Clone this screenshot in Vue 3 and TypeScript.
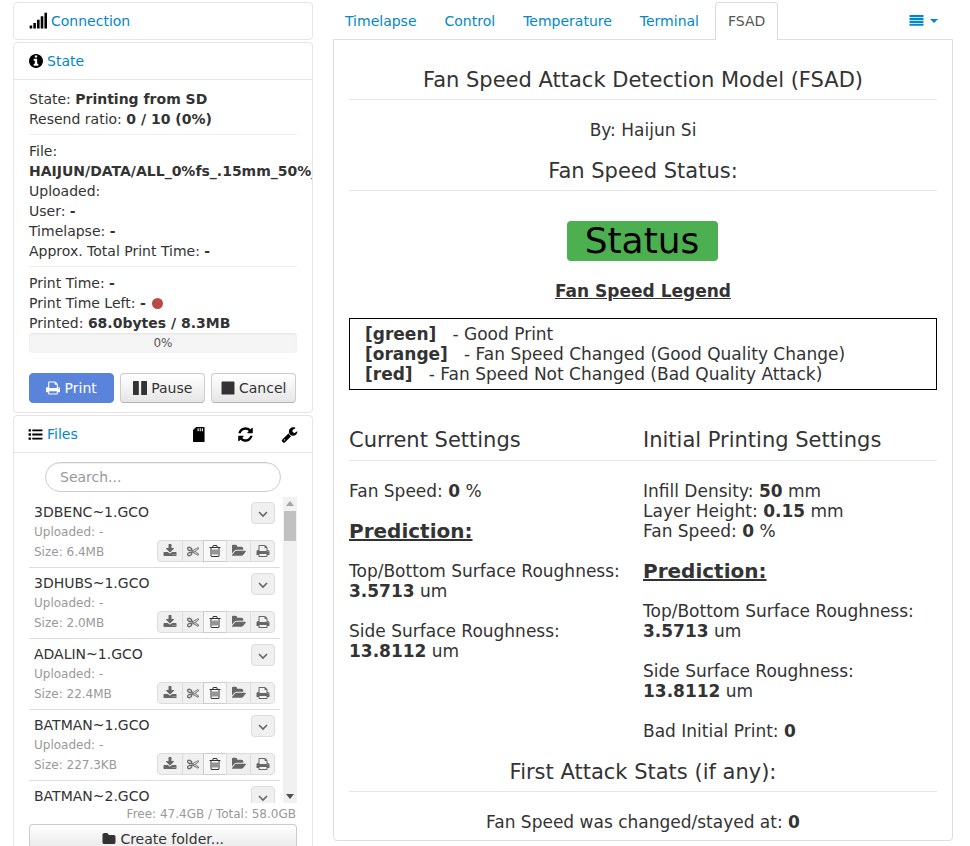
<script setup lang="ts">
const icons: Record<string, string> = {
  info: 'M1152 1376v-160q0-14-9-23t-23-9h-96v-512q0-14-9-23t-23-9h-320q-14 0-23 9t-9 23v160q0 14 9 23t23 9h96v320h-96q-14 0-23 9t-9 23v160q0 14 9 23t23 9h448q14 0 23-9t9-23zm-128-896v-160q0-14-9-23t-23-9h-192q-14 0-23 9t-9 23v160q0 14 9 23t23 9h192q14 0 23-9t9-23zm640 416q0 209-103 385.5t-279.5 279.5-385.5 103-385.5-103-279.5-279.5-103-385.5 103-385.5 279.5-279.5 385.5-103 385.5 103 279.5 279.5 103 385.5z',
  print: 'M448 1536h896v-256h-896v256zm0-640h896v-384h-160q-40 0-68-28t-28-68v-160h-640v640zm1152 64q0-26-19-45t-45-19-45 19-19 45 19 45 45 19 45-19 19-45zm128 0v416q0 13-9.5 22.5t-22.5 9.5h-224v160q0 40-28 68t-68 28h-960q-40 0-68-28t-28-68v-160h-224q-13 0-22.5-9.5t-9.5-22.5v-416q0-79 56.5-135.5t135.5-56.5h64v-544q0-40 28-68t68-28h672q40 0 88 20t76 48l152 152q28 28 48 76t20 88v256h64q79 0 135.5 56.5t56.5 135.5z',
  pause: 'M1664 192v1408q0 26-19 45t-45 19h-512q-26 0-45-19t-19-45v-1408q0-26 19-45t45-19h512q26 0 45 19t19 45zm-896 0v1408q0 26-19 45t-45 19h-512q-26 0-45-19t-19-45v-1408q0-26 19-45t45-19h512q26 0 45 19t19 45z',
  stop: 'M1664 192v1408q0 26-19 45t-45 19h-1408q-26 0-45-19t-19-45v-1408q0-26 19-45t45-19h1408q26 0 45 19t19 45z',
  refresh: 'M1639 1056q0 5-1 7-64 268-268 434.5t-478 166.5q-146 0-282.5-55t-243.5-157l-129 129q-19 19-45 19t-45-19-19-45v-448q0-26 19-45t45-19h448q26 0 45 19t19 45-19 45l-137 137q71 66 161 102t187 36q134 0 250-65t186-179q11-17 53-117 8-23 30-23h192q13 0 22.5 9.5t9.5 22.5zm25-800v448q0 26-19 45t-45 19h-448q-26 0-45-19t-19-45 19-45l138-138q-148-137-349-137-134 0-250 65t-186 179q-11 17-53 117-8 23-30 23h-199q-13 0-22.5-9.5t-9.5-22.5v-7q65-268 270-434.5t480-166.5q146 0 284 55.5t245 156.5l130-129q19-19 45-19t45 19 19 45z',
  wrench: 'M448 1472q0-26-19-45t-45-19-45 19-19 45 19 45 45 19 45-19 19-45zm644-420l-682 682q-37 37-90 37-52 0-91-37l-106-108q-38-36-38-90 0-53 38-91l681-681q39 98 114.5 173.5t173.5 114.5zm634-435q0 39-23 106-47 134-164.5 217.5t-258.5 83.5q-185 0-316.5-131.5t-131.5-316.5 131.5-316.5 316.5-131.5q58 0 121.5 16.5t107.5 46.5q16 11 16 28t-16 28l-293 169v224l193 107q5-3 79-48.5t135.5-81 70.5-35.5q15 0 23.5 10t8.5 25z',
  download: 'M1344 1344q0-26-19-45t-45-19-45 19-19 45 19 45 45 19 45-19 19-45zm256 0q0-26-19-45t-45-19-45 19-19 45 19 45 45 19 45-19 19-45zm128-224v320q0 40-28 68t-68 28h-1472q-40 0-68-28t-28-68v-320q0-40 28-68t68-28h465l135 136q58 56 136 56t136-56l136-136h464q40 0 68 28t28 68zm-325-569q17 41-14 70l-448 448q-18 19-45 19t-45-19l-448-448q-31-29-14-70 17-39 59-39h256v-448q0-26 19-45t45-19h256q26 0 45 19t19 45v448h256q42 0 59 39z',
  open: 'M1781 931q0 31-31 66l-336 396q-43 51-120.5 86.5t-143.5 35.5h-1088q-34 0-60.5-13t-26.5-43q0-31 31-66l336-396q43-51 120.5-86.5t143.5-35.5h1088q34 0 60.5 13t26.5 43zm-343-344v160h-832q-94 0-197 47.5t-164 119.5l-337 396-5 6q0-4-.5-12.5t-.5-12.5v-960q0-92 66-158t158-66h320q92 0 158 66t66 158v32h544q92 0 158 66t66 158z',
  folder: 'M1728 608v704q0 92-66 158t-158 66h-1216q-92 0-158-66t-66-158v-960q0-92 66-158t158-66h320q92 0 158 66t66 158v32h672q92 0 158 66t66 158z',
  trash: 'M704 736v576q0 14-9 23t-23 9h-64q-14 0-23-9t-9-23v-576q0-14 9-23t23-9h64q14 0 23 9t9 23zm256 0v576q0 14-9 23t-23 9h-64q-14 0-23-9t-9-23v-576q0-14 9-23t23-9h64q14 0 23 9t9 23zm256 0v576q0 14-9 23t-23 9h-64q-14 0-23-9t-9-23v-576q0-14 9-23t23-9h64q14 0 23 9t9 23zm128 724v-948h-896v948q0 22 7 40.5t14.5 27 10.5 8.5h832q3 0 10.5-8.5t14.5-27 7-40.5zm-672-1076h448l-48-117q-7-9-17-11h-317q-10 2-17 11zm928 32v64q0 14-9 23t-23 9h-96v948q0 83-47 143.5t-113 60.5h-832q-66 0-113-58.5t-47-141.5v-952h-96q-14 0-23-9t-9-23v-64q0-14 9-23t23-9h309l70-167q15-37 54-63t79-26h320q40 0 79 26t54 63l70 167h309q14 0 23 9t9 23z',
  cut: 'M960 896q26 0 45 19t19 45-19 45-45 19-45-19-19-45 19-45 45-19zm300 64l507 398q28 20 25 56-5 35-35 51l-128 64q-13 7-29 7-17 0-31-8l-690-387-110 66q-8 4-12 5 14 49 10 97-7 77-56 147.5t-132 123.5q-132 84-277 84-136 0-222-78-90-84-79-207 7-76 56-147t131-124q132-84 278-84 83 0 151 31 9-13 22-22l122-73-122-73q-13-9-22-22-68 31-151 31-146 0-278-84-82-53-131-124t-56-147q-5-59 15.5-113t63.5-93q85-79 222-79 145 0 277 84 83 52 132 123t56 148q4 48-10 97 4 1 12 5l110 66 690-387q14-8 31-8 16 0 29 7l128 64q30 16 35 51 3 36-25 56zm-681-260q46-42 21-108t-106-117q-92-59-192-59-74 0-113 36-46 42-21 108t106 117q92 59 192 59 74 0 113-36zm-85 745q81-51 106-117t-21-108q-39-36-113-36-100 0-192 59-81 51-106 117t21 108q39 36 113 36 100 0 192-59zm178-613l96 58v-11q0-36 33-56l14-8-79-47-26 26q-3 3-10 11t-12 12q-2 2-4 3.5t-3 2.5zm224 224l96 32 736-576-128-64-768 431v113l-160 96 9 8q2 2 7 6 4 4 11 12t11 12l26 26zm704 416l128-64-520-408-177 138q-2 3-13 7z',
  sd: 'M640 96h832q64 0 64 64v1472q0 64-64 64H384q-64 0-64-64V416zM800 224v320h112V224zm224 0v320h112V224zm224 0v320h112V224z',
  list: 'M64 256h288v288H64zM512 288h1216v224H512zM64 752h288v288H64zM512 784h1216v224H512zM64 1248h288v288H64zM512 1280h1216v224H512z',
  bars: 'M64 224h1664v256H64zM64 576h1664v256H64zM64 928h1664v256H64zM64 1280h1664v256H64z',
  signal: 'M64 1344h256v288H64zM432 1088h256v544H432zM800 768h256v864H800zM1168 416h256v1216h-256zM1536 64h256v1568h-256z'
}

const tabs = ['Timelapse', 'Control', 'Temperature', 'Terminal']
const actions = ['download', 'cut', 'trash', 'open', 'print']

const files = [
  { name: '3DBENC~1.GCO', size: '6.4MB' },
  { name: '3DHUBS~1.GCO', size: '2.0MB' },
  { name: 'ADALIN~1.GCO', size: '22.4MB' },
  { name: 'BATMAN~1.GCO', size: '227.3KB' },
  { name: 'BATMAN~2.GCO', size: '1.1MB' }
]
</script>

<template>
  <div class="page">
    <aside class="sidebar">
      <section class="panel">
        <div class="panel-head plain">
          <svg class="ico signal" viewBox="0 0 1792 1792"><path :d="icons.signal" /></svg>
          <a class="link">Connection</a>
        </div>
      </section>

      <section class="panel state">
        <div class="panel-head">
          <svg class="ico" viewBox="128 128 1536 1536"><path :d="icons.info" /></svg>
          <a class="link">State</a>
        </div>
        <div class="state-body">
          <div>State: <strong>Printing from SD</strong></div>
          <div>Resend ratio: <strong>0 / 10 (0%)</strong></div>
          <hr />
          <div>File:</div>
          <div class="nowrap"><strong>HAIJUN/DATA/ALL_0%fs_.15mm_50%_cube.gcode</strong></div>
          <div>Uploaded:</div>
          <div>User: <strong>-</strong></div>
          <div>Timelapse: <strong>-</strong></div>
          <div>Approx. Total Print Time: <strong>-</strong></div>
          <hr />
          <div>Print Time: <strong>-</strong></div>
          <div>Print Time Left: <strong>-</strong> <span class="dot"></span></div>
          <div>Printed: <strong>68.0bytes / 8.3MB</strong></div>
          <div class="progress">0%</div>
          <div class="controls">
            <button class="btn primary">
              <svg class="ico" viewBox="64 64 1664 1664"><path :d="icons.print" /></svg> Print
            </button>
            <button class="btn">
              <svg class="ico" viewBox="128 128 1536 1536"><path :d="icons.pause" /></svg> Pause
            </button>
            <button class="btn">
              <svg class="ico" viewBox="64 64 1664 1664"><path :d="icons.stop" /></svg> Cancel
            </button>
          </div>
        </div>
      </section>

      <section class="panel files">
        <div class="panel-head files-head">
          <svg class="ico black list-ico" viewBox="0 0 1792 1792"><path :d="icons.list" /></svg>
          <a class="link">Files</a>
          <span class="spacer"></span>
          <svg class="ico black sd" viewBox="0 0 1792 1792"><path :d="icons.sd" /></svg>
          <svg class="ico black refresh" viewBox="0 0 1792 1792"><path :d="icons.refresh" /></svg>
          <svg class="ico black wrench" viewBox="0 0 1792 1792"><path :d="icons.wrench" /></svg>
        </div>
        <div class="files-body">
          <div class="search-wrap">
            <input class="search" type="text" placeholder="Search..." />
          </div>
          <div class="list-wrap">
            <div class="list">
              <div v-for="file in files" :key="file.name" class="row">
                <div class="row-top">
                  <span class="name">{{ file.name }}</span>
                  <button class="toggle">
                    <svg viewBox="0 0 12 8" width="12" height="8"><path d="M2 2l4 4 4-4" fill="none" stroke="#666" stroke-width="1.6" /></svg>
                  </button>
                </div>
                <div class="meta">Uploaded: -</div>
                <div class="row-bottom">
                  <span class="meta">Size: {{ file.size }}</span>
                  <div class="group">
                    <button v-for="a in actions" :key="a" class="act" :class="a">
                      <svg class="ico" viewBox="0 0 1792 1792"><path :d="icons[a]" /></svg>
                    </button>
                  </div>
                </div>
              </div>
            </div>
            <div class="scrollbar">
              <span class="arrow up"></span>
              <span class="thumb"></span>
              <span class="spacer"></span>
              <span class="arrow down"></span>
            </div>
          </div>
          <div class="free">Free: 47.4GB / Total: 58.0GB</div>
          <button class="btn create">
            <svg class="ico" viewBox="0 0 1792 1792"><path :d="icons.folder" /></svg> Create folder...
          </button>
        </div>
      </section>
    </aside>

    <main class="main">
      <nav class="tabs">
        <a v-for="tab in tabs" :key="tab" class="tab">{{ tab }}</a>
        <a class="tab active">FSAD</a>
        <span class="spacer"></span>
        <span class="menu">
          <svg class="ico" viewBox="0 0 1792 1792"><path :d="icons.bars" /></svg>
          <span class="caret"></span>
        </span>
      </nav>
      <div class="content">
        <h3 class="title">Fan Speed Attack Detection Model (FSAD)</h3>
        <p class="center by">By: Haijun Si</p>
        <h3 class="title status-title">Fan Speed Status:</h3>
        <div class="status-wrap"><div class="status">Status</div></div>
        <p class="center legend-title">Fan Speed Legend</p>
        <div class="legend">
          <div><strong>[green]</strong> &nbsp; - Good Print</div>
          <div><strong>[orange]</strong> &nbsp; - Fan Speed Changed (Good Quality Change)</div>
          <div><strong>[red]</strong> &nbsp; - Fan Speed Not Changed (Bad Quality Attack)</div>
        </div>
        <div class="columns">
          <div class="col">
            <h3 class="col-title">Current Settings</h3>
            <p>Fan Speed: <strong>0</strong> %</p>
            <p class="prediction">Prediction:</p>
            <p>Top/Bottom Surface Roughness:<br /><strong>3.5713</strong> um</p>
            <p>Side Surface Roughness:<br /><strong>13.8112</strong> um</p>
          </div>
          <div class="col">
            <h3 class="col-title">Initial Printing Settings</h3>
            <p>Infill Density: <strong>50</strong> mm<br />Layer Height: <strong>0.15</strong> mm<br />Fan Speed: <strong>0</strong> %</p>
            <p class="prediction">Prediction:</p>
            <p>Top/Bottom Surface Roughness:<br /><strong>3.5713</strong> um</p>
            <p>Side Surface Roughness:<br /><strong>13.8112</strong> um</p>
            <p>Bad Initial Print: <strong>0</strong></p>
          </div>
        </div>
        <h3 class="title attack-title">First Attack Stats (if any):</h3>
        <p class="center attack">Fan Speed was changed/stayed at: <strong>0</strong></p>
      </div>
    </main>
  </div>
</template>

<style>
html, body {
  margin: 0;
  height: 846px;
  overflow: hidden;
  background: #fff;
}
</style>

<style scoped>
.page {
  display: flex;
  gap: 20px;
  width: 970px;
  height: 846px;
  padding: 2px 17px 0 13px;
  box-sizing: border-box;
  overflow: hidden;
  font-family: "DejaVu Sans", sans-serif;
  font-size: 14px;
  line-height: 20px;
  color: #333;
}

.ico {
  width: 14px;
  height: 14px;
  fill: currentColor;
  vertical-align: -2px;
}

.spacer { flex: 1; }
.link { color: #08c; }

.sidebar {
  width: 300px;
  flex: none;
  display: flex;
  flex-direction: column;
  gap: 2px;
}

.panel {
  flex: none;
  border: 1px solid #e5e5e5;
  border-radius: 4px;
  box-sizing: border-box;
  overflow: hidden;
}

.panel-head {
  display: flex;
  align-items: center;
  gap: 4px;
  height: 36px;
  padding: 0 15px;
  color: #000;
  border-bottom: 1px solid #e5e5e5;
}

.panel-head.plain {
  border-bottom: 0;
}

.signal { width: 18px; height: 18px; }

.state-body {
  padding: 9px 15px;
}

hr {
  margin: 5px 0 6px;
  border: 0;
  border-top: 1px solid #eee;
}

.nowrap { white-space: nowrap; }

.dot {
  display: inline-block;
  width: 11px;
  height: 11px;
  margin-left: 2px;
  border-radius: 50%;
  background: #b94a48;
  vertical-align: -1px;
}

.progress {
  height: 20px;
  font-size: 12px;
  text-align: center;
  color: #555;
  background: #f5f5f5;
  border-radius: 4px;
  box-shadow: inset 0 1px 2px rgba(0, 0, 0, 0.08);
}

.controls {
  display: grid;
  grid-template-columns: repeat(3, 85px);
  gap: 6px;
  margin-top: 20px;
}

.btn {
  height: 30px;
  padding: 0;
  font: inherit;
  color: #333;
  background: linear-gradient(#fff, #e6e6e6);
  border: 1px solid #ccc;
  border-bottom-color: #b3b3b3;
  border-radius: 4px;
}

.btn.primary {
  color: #fff;
  background: #5a83dc;
  border-color: #5a83dc;
}

.files { height: 500px; }

.files-head { gap: 5px; }
.black { color: #000; }
.list-ico { width: 15px; height: 15px; margin-left: -1px; margin-right: -1px; }
.sd { width: 17px; height: 17px; margin-right: 25px; }
.refresh { width: 17px; height: 17px; margin-right: 22px; }
.wrench { width: 17px; height: 17px; margin-right: -1px; }

.files-body {
  padding: 9px 15px 0;
}

.search-wrap {
  padding: 0 16px;
}

.search {
  display: block;
  width: 100%;
  height: 30px;
  padding: 0 14px;
  box-sizing: border-box;
  font: inherit;
  border: 1px solid #ccc;
  border-radius: 15px;
  box-shadow: inset 0 1px 1px rgba(0, 0, 0, 0.07);
  outline: none;
}

.search::placeholder { color: #999; }

.list-wrap {
  display: flex;
  justify-content: space-between;
  height: 306px;
  margin-top: 5px;
  overflow: hidden;
}

.list { width: 251px; }

.row {
  height: 71px;
  padding: 5px 5px 0;
  box-sizing: border-box;
  border-bottom: 1px solid #ddd;
}

.row-top, .row-bottom {
  display: flex;
  justify-content: space-between;
  align-items: flex-start;
}

.toggle {
  width: 24px;
  height: 22px;
  padding: 0;
  margin-bottom: -2px;
  background: #f0f0f0;
  border: 1px solid #ddd;
  border-radius: 4px;
}

.meta {
  font-size: 12px;
  color: #999;
}

.group {
  display: flex;
  margin-top: -2px;
}

.act {
  display: flex;
  align-items: center;
  justify-content: center;
  width: 25px;
  height: 22px;
  padding: 0;
  margin-left: -1px;
  color: #666;
  background: #f0f0f0;
  border: 1px solid #ddd;
}

.act.download { width: 26px; border-radius: 4px 0 0 4px; }
.act.cut { width: 22px; }
.act.cut .ico {
  width: 12px;
  height: 12px;
  stroke: currentColor;
  stroke-width: 50;
}
.act.trash {
  width: 24px;
  color: #333;
  background: #f8f8f8;
  border-color: #ccc;
}
.act.print { border-radius: 0 4px 4px 0; }

.scrollbar {
  display: flex;
  flex-direction: column;
  align-items: center;
  width: 14px;
  background: #f1f1f1;
}

.thumb {
  width: 12px;
  height: 30px;
  margin-top: 5px;
  background: #c1c1c1;
}

.arrow {
  width: 0;
  height: 0;
  border-left: 4px solid transparent;
  border-right: 4px solid transparent;
}

.arrow.up { margin-top: 4px; border-bottom: 5px solid #a3a3a3; }
.arrow.down { margin-bottom: 4px; border-top: 5px solid #505050; }

.free {
  height: 20px;
  margin-top: 1px;
  padding-right: 1px;
  font-size: 12px;
  text-align: right;
  color: #999;
}

.create {
  display: block;
  width: 100%;
}

.main {
  flex: 1;
  min-width: 0;
}

.tabs {
  display: flex;
  align-items: flex-end;
  height: 37px;
  gap: 4px;
}

.tab {
  height: 36px;
  line-height: 36px;
  padding: 0 12px;
  color: #08c;
}

.tab.active {
  margin-bottom: -1px;
  height: 37px;
  color: #555;
  background: #fff;
  border: 1px solid #ddd;
  border-bottom: 0;
  border-radius: 4px 4px 0 0;
  position: relative;
}

.menu {
  align-self: center;
  margin-right: 15px;
  color: #08c;
}

.menu .ico { width: 15px; height: 15px; }

.caret {
  display: inline-block;
  margin-left: 6px;
  vertical-align: 3px;
  border-left: 4px solid transparent;
  border-right: 4px solid transparent;
  border-top: 4px solid #08c;
}

.content {
  height: 802px;
  padding: 15px;
  box-sizing: border-box;
  border: 1px solid #ddd;
  border-radius: 0 0 4px 4px;
}

p { margin: 0; }

.center { text-align: center; }

.title {
  margin: 0;
  height: 44px;
  line-height: 50px;
  font-size: 21px;
  font-weight: 400;
  text-align: center;
  border-bottom: 1px solid #e5e5e5;
}

.by {
  margin-top: 20px;
  font-size: 17px;
}

.status-title { margin-top: 6px; }

.status-wrap {
  display: flex;
  justify-content: center;
  margin-top: 30px;
  padding-right: 2px;
}

.status {
  width: 151px;
  height: 40px;
  line-height: 40px;
  font-size: 36px;
  text-align: center;
  color: #000;
  background: #4caf50;
  border-radius: 4px;
}

.legend-title {
  margin-top: 20px;
  font-weight: 700;
  font-size: 17px;
  text-decoration: underline;
}

.legend {
  margin-top: 17px;
  padding: 5px 15px;
  border: 1px solid #000;
  font-size: 17px;
}

.columns {
  display: grid;
  grid-template-columns: 294px 294px;
  margin-top: 30px;
}

.col-title {
  margin: 0 0 20px;
  height: 40px;
  line-height: 40px;
  font-size: 21px;
  font-weight: 400;
  border-bottom: 1px solid #e5e5e5;
}

.col p {
  margin-bottom: 20px;
  font-size: 17px;
}

.col .prediction {
  font-size: 20px;
  font-weight: 700;
  text-decoration: underline;
}

.attack-title { margin-top: -14px; }

.attack {
  margin-top: 20px;
  font-size: 17px;
}
</style>
